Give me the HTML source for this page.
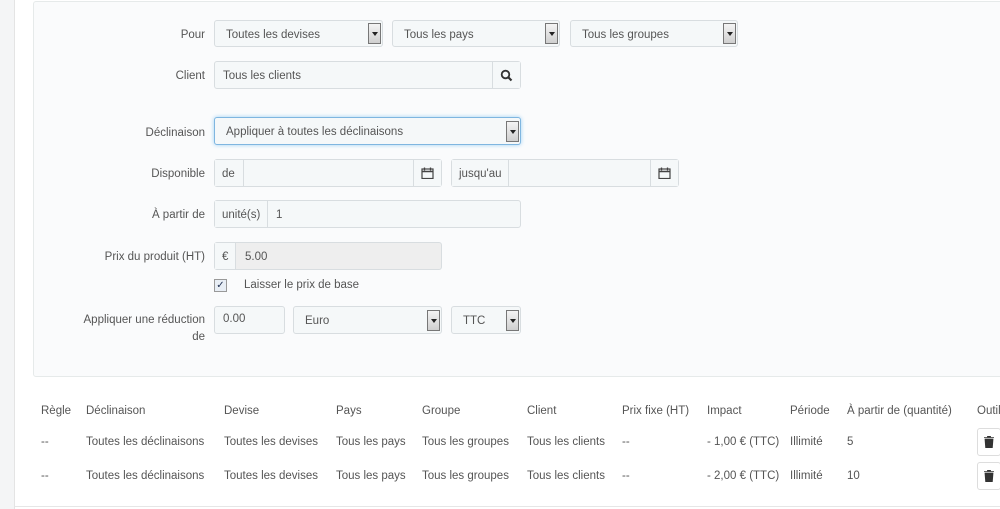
<!DOCTYPE html><html><head><meta charset="utf-8"><style>
body{margin:0;width:1000px;height:509px;overflow:hidden;background:#fff;font-family:"Liberation Sans",sans-serif;font-size:11.5px;line-height:17px;color:#555;position:relative}
.a{position:absolute}
.strip{left:0;top:0;width:14px;height:509px;background:#f4f5f6;border-right:1px solid #e4e4e4}
.panel{left:33px;top:1px;width:980px;height:374px;background:#fafbfc;border:1px solid #e6eaea;border-radius:3px}
.lbl{text-align:right;width:200px;left:5px;color:#555}
.box{background:#f5f8f9;border:1px solid #d8dde0;border-radius:3px;box-sizing:border-box;padding-left:11px;line-height:28px;color:#555}
.arr{position:absolute;right:1px;top:2px;width:13px;height:21px;background:linear-gradient(#f4f4f4,#cfcfcf);border:1px solid #777;box-sizing:border-box}
.arr:after{content:"";position:absolute;left:3px;top:8px;border-left:3px solid transparent;border-right:3px solid transparent;border-top:4px solid #222}
.add{position:absolute;top:0;bottom:0;border-right:1px solid #d8dde0;padding:0 7px;background:#f5f8f9}
.trash{width:24px;height:28px;border:1px solid #ddd;border-radius:3px;background:#fff;box-sizing:border-box}
.cal{position:absolute;left:7px;top:7px}
</style></head><body>
<div class="a strip"></div>
<div class="a panel"></div>
<div class="a lbl" style="top:27px">Pour</div>
<div class="a box" style="left:214px;top:20px;width:169px;height:27px">Toutes les devises<div class="arr"></div></div>
<div class="a box" style="left:392px;top:20px;width:168px;height:27px">Tous les pays<div class="arr"></div></div>
<div class="a box" style="left:570px;top:20px;width:168px;height:27px">Tous les groupes<div class="arr"></div></div>
<div class="a lbl" style="top:68px">Client</div>
<div class="a box" style="left:214px;top:61px;width:307px;height:28px;padding-left:8px">Tous les clients<div class="add" style="right:0;left:auto;border-left:1px solid #d8dde0;border-right:0;width:13px;padding:0 7px"><svg width="13" height="13" viewBox="0 0 13 13" style="margin-top:7px"><circle cx="5.5" cy="5.5" r="3.8" fill="none" stroke="#333" stroke-width="1.8"/><path d="M8.3 8.3L11.5 11.5" stroke="#333" stroke-width="2.2"/></svg></div></div>
<div class="a lbl" style="top:125px">Déclinaison</div>
<div class="a box" style="left:214px;top:117px;width:307px;height:28px;border-color:#7fb6e0;box-shadow:0 0 4px #9cd0f5">Appliquer à toutes les déclinaisons<div class="arr" style="top:3px"></div></div>
<div class="a lbl" style="top:166px">Disponible</div>
<div class="a box" style="left:214px;top:159px;width:228px;height:28px;padding:0"><div class="add" style="left:0;width:14px">de</div><div class="add" style="right:0;border-right:0;border-left:1px solid #d8dde0;width:13px"><svg class="cal" width="13" height="12" viewBox="0 0 13 12"><rect x="1" y="2" width="11" height="9.5" fill="none" stroke="#444" stroke-width="1.2"/><path d="M1 4.5h11" stroke="#444" stroke-width="1.5"/><path d="M3.5 0.5v3M9.5 0.5v3" stroke="#444" stroke-width="1.3"/></svg></div></div>
<div class="a box" style="left:451px;top:159px;width:228px;height:28px;padding:0"><div class="add" style="left:0">jusqu'au</div><div class="add" style="right:0;border-right:0;border-left:1px solid #d8dde0;width:13px"><svg class="cal" width="13" height="12" viewBox="0 0 13 12"><rect x="1" y="2" width="11" height="9.5" fill="none" stroke="#444" stroke-width="1.2"/><path d="M1 4.5h11" stroke="#444" stroke-width="1.5"/><path d="M3.5 0.5v3M9.5 0.5v3" stroke="#444" stroke-width="1.3"/></svg></div></div>
<div class="a lbl" style="top:207px">À partir de</div>
<div class="a box" style="left:214px;top:200px;width:307px;height:28px;padding:0"><div class="add" style="left:0">unité(s)</div><span style="position:absolute;left:61px">1</span></div>
<div class="a lbl" style="top:249px">Prix du produit (HT)</div>
<div class="a box" style="left:214px;top:242px;width:228px;height:28px;padding:0;background:#eeeeee"><div class="add" style="left:0">€</div><span style="position:absolute;left:30px">5.00</span></div>
<div class="a" style="left:214px;top:279px;width:11px;height:11px;border:1px solid #999;background:#e8eef5;font-size:10px;line-height:11px;text-align:center;color:#235">&#10003;</div>
<div class="a" style="left:244px;top:277px">Laisser le prix de base</div>
<div class="a lbl" style="top:312px;line-height:17px">Appliquer une réduction<br>de</div>
<div class="a box" style="left:214px;top:306px;width:71px;height:28px;padding-left:8px;line-height:25px">0.00</div>
<div class="a box" style="left:293px;top:306px;width:149px;height:28px">Euro<div class="arr" style="top:3px"></div></div>
<div class="a box" style="left:451px;top:306px;width:70px;height:28px">TTC<div class="arr" style="top:3px"></div></div>
<div class="a" style="top:403px;left:41px">Règle</div>
<div class="a" style="top:403px;left:86px">Déclinaison</div>
<div class="a" style="top:403px;left:224px">Devise</div>
<div class="a" style="top:403px;left:336px">Pays</div>
<div class="a" style="top:403px;left:422px">Groupe</div>
<div class="a" style="top:403px;left:527px">Client</div>
<div class="a" style="top:403px;left:622px">Prix fixe (HT)</div>
<div class="a" style="top:403px;left:707px">Impact</div>
<div class="a" style="top:403px;left:790px">Période</div>
<div class="a" style="top:403px;left:847px">À partir de (quantité)</div>
<div class="a" style="top:403px;left:977px">Outils</div>
<div class="a" style="top:434px;left:41px">--</div><div class="a" style="top:434px;left:86px">Toutes les déclinaisons</div><div class="a" style="top:434px;left:224px">Toutes les devises</div><div class="a" style="top:434px;left:336px">Tous les pays</div><div class="a" style="top:434px;left:422px">Tous les groupes</div><div class="a" style="top:434px;left:527px">Tous les clients</div><div class="a" style="top:434px;left:622px">--</div><div class="a" style="top:434px;left:707px">- 1,00 € (TTC)</div><div class="a" style="top:434px;left:790px">Illimité</div><div class="a" style="top:434px;left:847px">5</div>
<div class="a" style="top:468px;left:41px">--</div><div class="a" style="top:468px;left:86px">Toutes les déclinaisons</div><div class="a" style="top:468px;left:224px">Toutes les devises</div><div class="a" style="top:468px;left:336px">Tous les pays</div><div class="a" style="top:468px;left:422px">Tous les groupes</div><div class="a" style="top:468px;left:527px">Tous les clients</div><div class="a" style="top:468px;left:622px">--</div><div class="a" style="top:468px;left:707px">- 2,00 € (TTC)</div><div class="a" style="top:468px;left:790px">Illimité</div><div class="a" style="top:468px;left:847px">10</div>
<div class="a trash" style="left:977px;top:428px"><svg width="10" height="12" viewBox="0 0 10 12" style="margin:7px 0 0 6px"><path d="M0 1.5h10M3.5 1.5V0h3v1.5M1 3h8l-.7 9H1.7z" fill="#333" stroke="#333" stroke-width=".8"/></svg></div>
<div class="a trash" style="left:977px;top:462px"><svg width="10" height="12" viewBox="0 0 10 12" style="margin:7px 0 0 6px"><path d="M0 1.5h10M3.5 1.5V0h3v1.5M1 3h8l-.7 9H1.7z" fill="#333" stroke="#333" stroke-width=".8"/></svg></div>
<div class="a" style="left:15px;top:506px;width:985px;height:1px;background:#e6e6e6"></div>
</body></html>
